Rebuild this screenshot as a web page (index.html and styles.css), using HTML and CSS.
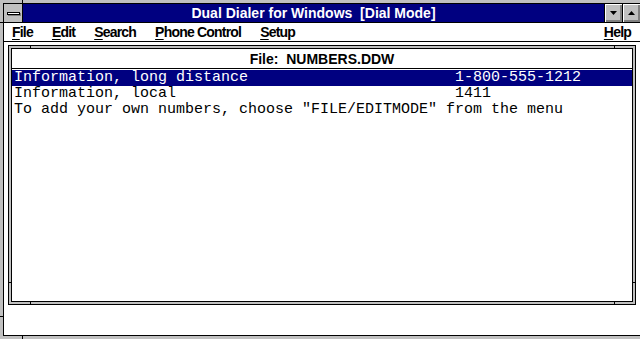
FILE: index.html
```html
<!DOCTYPE html>
<html lang="en">
<head>
    <meta charset="UTF-8">
    <title>Dual Dialer for Windows</title>
    <link rel="stylesheet" href="styles.css">
</head>
<body>
    <div class="window">
        <span class="tick tick-v" style="left: 22px; top: 0;"></span>
        <span class="tick tick-h" style="left: 0; top: 22px;"></span>
        <span class="tick tick-v" style="left: 22px; bottom: 0;"></span>
        <span class="tick tick-h" style="left: 0; top: 316px;"></span>

        <div class="window-inner">
            <div class="titlebar">
                <div class="sysmenu"><span class="sysmenu-bar"></span></div>
                <div class="title">Dual Dialer for Windows  [Dial Mode]</div>
                <div class="caption-btn">
                    <svg width="7" height="4" viewBox="0 0 7 4"><polygon points="0,0 7,0 3.5,4" fill="#000"/></svg>
                </div>
                <div class="caption-btn">
                    <svg width="7" height="4" viewBox="0 0 7 4"><polygon points="3.5,0 7,4 0,4" fill="#000"/></svg>
                </div>
            </div>

            <div class="menubar">
                <span class="menu-item"><u>F</u>ile</span>
                <span class="menu-item"><u>E</u>dit</span>
                <span class="menu-item"><u>S</u>earch</span>
                <span class="menu-item"><u>P</u>hone Control</span>
                <span class="menu-item"><u>S</u>etup</span>
                <span class="menu-item menu-help"><u>H</u>elp</span>
            </div>

            <div class="client">
                <div class="child">
                    <span class="tick child-v" style="left: 21px; top: 0;"></span>
                    <span class="tick child-v" style="left: 605px; top: 0;"></span>
                    <span class="tick child-v" style="left: 21px; bottom: 0;"></span>
                    <span class="tick child-v" style="left: 605px; bottom: 0;"></span>
                    <span class="tick child-h" style="left: 0; top: 236px;"></span>
                    <span class="tick child-h" style="right: 0; top: 236px;"></span>

                    <div class="child-inner">
                        <div class="child-caption">File:  NUMBERS.DDW</div>
                        <div class="list">
                            <div class="row selected"><span class="name">Information, long distance</span><span>1-800-555-1212</span></div>
                            <div class="row"><span class="name">Information, local</span><span>1411</span></div>
                            <div class="row"><span>To add your own numbers, choose "FILE/EDITMODE" from the menu</span></div>
                        </div>
                    </div>
                </div>
            </div>
        </div>
    </div>
</body>
</html>
```

FILE: styles.css
```css
* {
    margin: 0;
    padding: 0;
    box-sizing: border-box;
}

body {
    width: 640px;
    height: 339px;
    overflow: hidden;
    background-color: #fff;
    font-family: "Liberation Sans", Arial, sans-serif;
}

/* main frame */
.window {
    position: relative;
    width: 644px;
    height: 339px;
    padding: 3px;
    background-color: #c0c0c0;
}

.window-inner {
    display: flex;
    flex-direction: column;
    height: 100%;
    border: 1px solid #000;
    background-color: #fff;
}

.tick {
    position: absolute;
    background-color: #000;
}

.tick-v {
    width: 1px;
    height: 3px;
}

.tick-h {
    width: 3px;
    height: 1px;
}

/* caption */
.titlebar {
    display: flex;
    height: 19px;
    border-bottom: 1px solid #000;
}

.sysmenu {
    width: 18px;
    display: flex;
    align-items: center;
    justify-content: center;
    background-color: #c0c0c0;
}

.sysmenu-bar {
    width: 13px;
    height: 3px;
    border: 1px solid #000;
    background-color: #fff;
    box-shadow: 1px 1px 0 #808080;
}

.title {
    flex: 1;
    border-left: 1px solid #000;
    background-color: #000080;
    color: #fff;
    font-size: 14px;
    font-weight: bold;
    line-height: 18px;
    text-align: center;
    white-space: pre;
}

.caption-btn {
    width: 18px;
    display: flex;
    align-items: center;
    justify-content: center;
    border-left: 1px solid #000;
    background-color: #c0c0c0;
    box-shadow: inset 1px 1px 0 #fff, inset -1px -1px 0 #808080, inset -2px -2px 0 #808080;
}

.caption-btn svg {
    display: block;
}

/* menu */
.menubar {
    display: flex;
    align-items: center;
    gap: 19px;
    height: 19px;
    padding: 0 9px 0 8px;
    border-bottom: 1px solid #000;
    font-size: 14px;
    font-weight: bold;
    letter-spacing: -0.8px;
    white-space: nowrap;
}

.menu-item u {
    text-underline-offset: 2px;
}

.menu-help {
    margin-left: auto;
}

/* document window */
.client {
    flex: 1;
    padding: 3px 4px 0;
}

.child {
    position: relative;
    height: 260px;
    padding: 2px;
    border: 1px solid #000;
    background-color: #c0c0c0;
}

.child-v {
    width: 1px;
    height: 2px;
}

.child-h {
    width: 2px;
    height: 1px;
}

.child-inner {
    display: flex;
    flex-direction: column;
    height: 100%;
    border: 1px solid #000;
    background-color: #fff;
}

.child-caption {
    height: 20px;
    padding-top: 1px;
    border-bottom: 1px solid #000;
    font-size: 14px;
    font-weight: bold;
    line-height: 18px;
    text-align: center;
    white-space: pre;
}

.list {
    padding-top: 1px;
    font-family: "Liberation Mono", "Courier New", monospace;
    font-size: 15px;
    line-height: 16px;
}

.row {
    display: flex;
    padding-left: 2px;
    white-space: pre;
}

.row.selected {
    background-color: #000080;
    color: #fff;
}

.name {
    width: 441px;
}
```
